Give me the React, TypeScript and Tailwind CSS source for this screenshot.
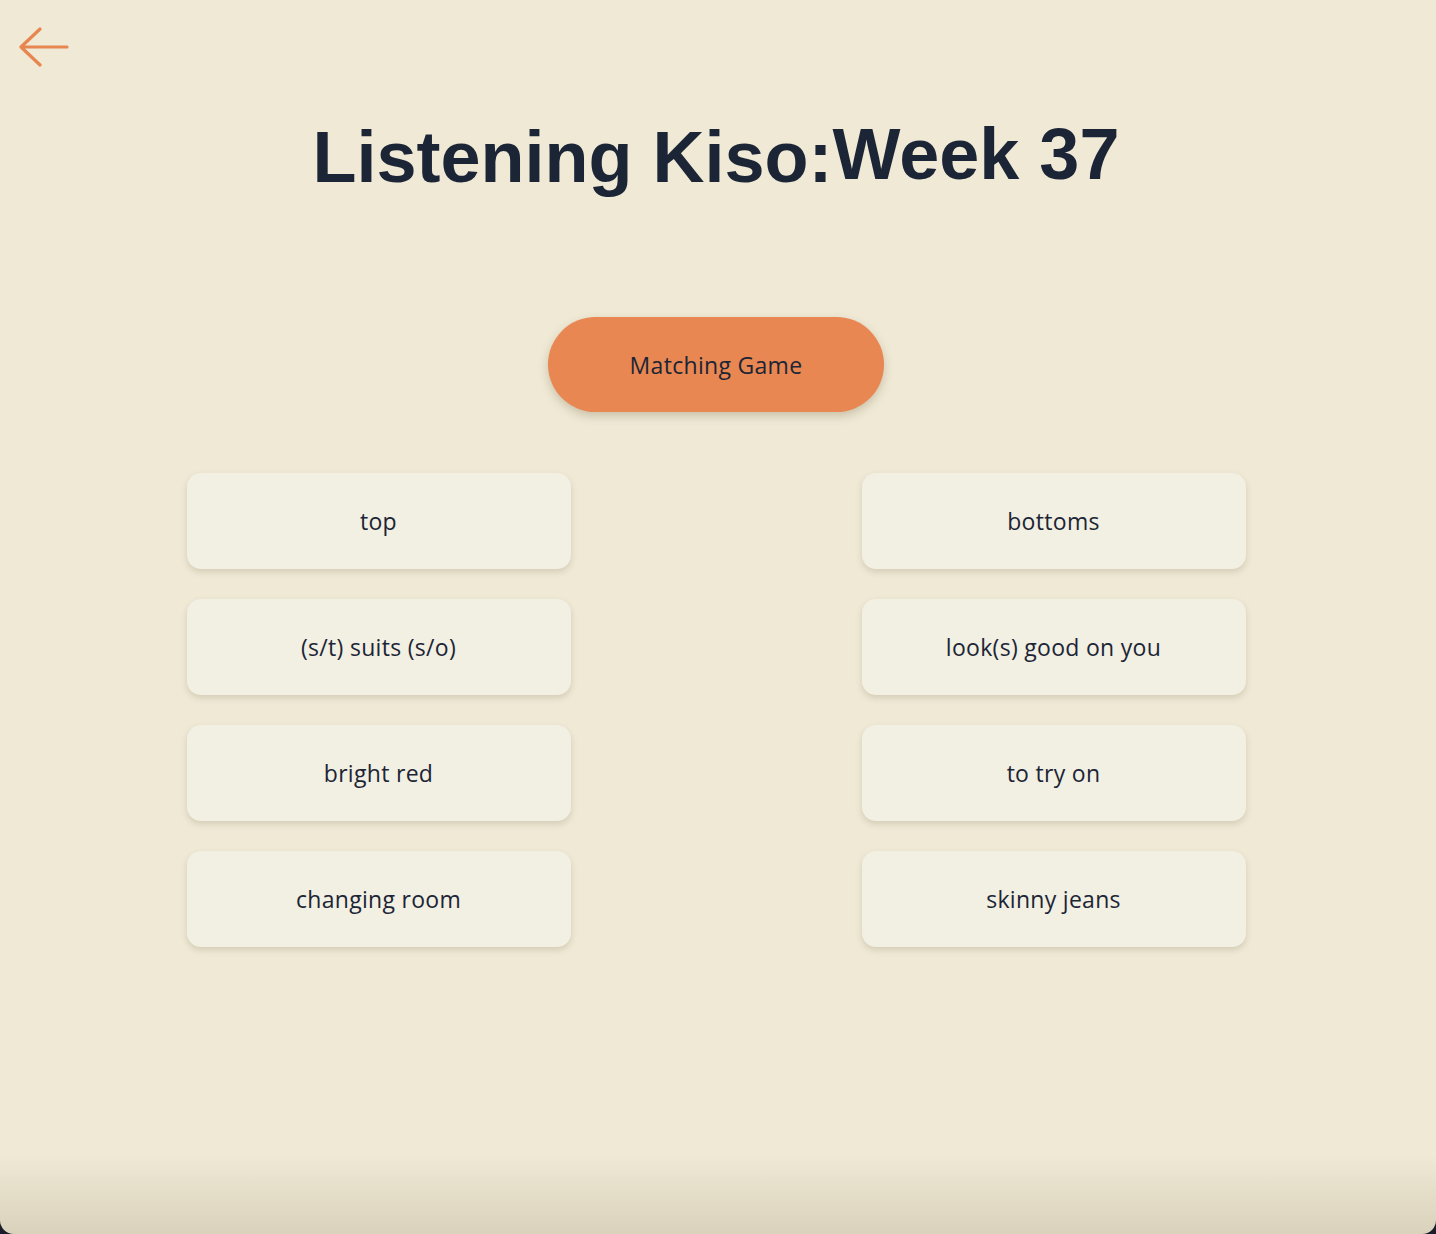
import React from "react";

const left = ["top", "(s/t) suits (s/o)", "bright red", "changing room"];
const right = ["bottoms", "look(s) good on you", "to try on", "skinny jeans"];

function Card({ label }: { label: string }) {
  return (
    <div className="flex h-[96px] w-[384px] items-center justify-center rounded-[14px] bg-[#f2efe3] pt-[1px] text-[23px] tracking-[0.3px] text-[#1c2535] shadow-[0_3px_6px_rgba(120,105,70,0.22)]">
      {label}
    </div>
  );
}

export default function App() {
  return (
    <div className="h-[1234px] w-full bg-[#1b1e2a]">
      <div
        className="relative h-[1234px] w-full overflow-hidden rounded-b-[14px] bg-[#efe9d6]"
        style={{ fontFamily: "'Open Sans', 'Noto Sans', sans-serif" }}
      >
        <div className="pointer-events-none absolute inset-x-0 bottom-0 h-[80px] bg-gradient-to-b from-[rgba(150,135,100,0)] to-[rgba(150,135,100,0.24)]" />
        <div className="relative flex flex-col pr-[4px]">
          <div className="ml-[18px] mt-[27px]">
            <svg width="52" height="40" viewBox="0 0 52 40" fill="none">
              <path
                d="M22 2 L3 20 L22 38 M3 20 L49 20"
                stroke="#e8864f"
                strokeWidth="3.2"
                strokeLinecap="round"
                strokeLinejoin="round"
              />
            </svg>
          </div>
          <h1
            className="mt-[54px] text-center text-[72px] font-bold leading-[72px] text-[#1c2535]"
            style={{ fontFamily: "'Liberation Sans', Arial, sans-serif" }}
          >
            Listening Kiso:<span className="relative -top-[3px]">Week 37</span>
          </h1>
          <div className="mt-[124px] flex justify-center">
            <button className="flex h-[95px] w-[336px] items-center justify-center rounded-full bg-[#e88752] pt-[1px] text-[23px] tracking-[0.3px] text-[#1c2535] shadow-[0_4px_10px_rgba(120,100,60,0.3)]">
              Matching Game
            </button>
          </div>
          <div className="mt-[61px] flex justify-center gap-[291px]">
            <div className="flex flex-col gap-[30px]">
              {left.map((l) => (
                <Card key={l} label={l} />
              ))}
            </div>
            <div className="flex flex-col gap-[30px]">
              {right.map((l) => (
                <Card key={l} label={l} />
              ))}
            </div>
          </div>
        </div>
      </div>
    </div>
  );
}
